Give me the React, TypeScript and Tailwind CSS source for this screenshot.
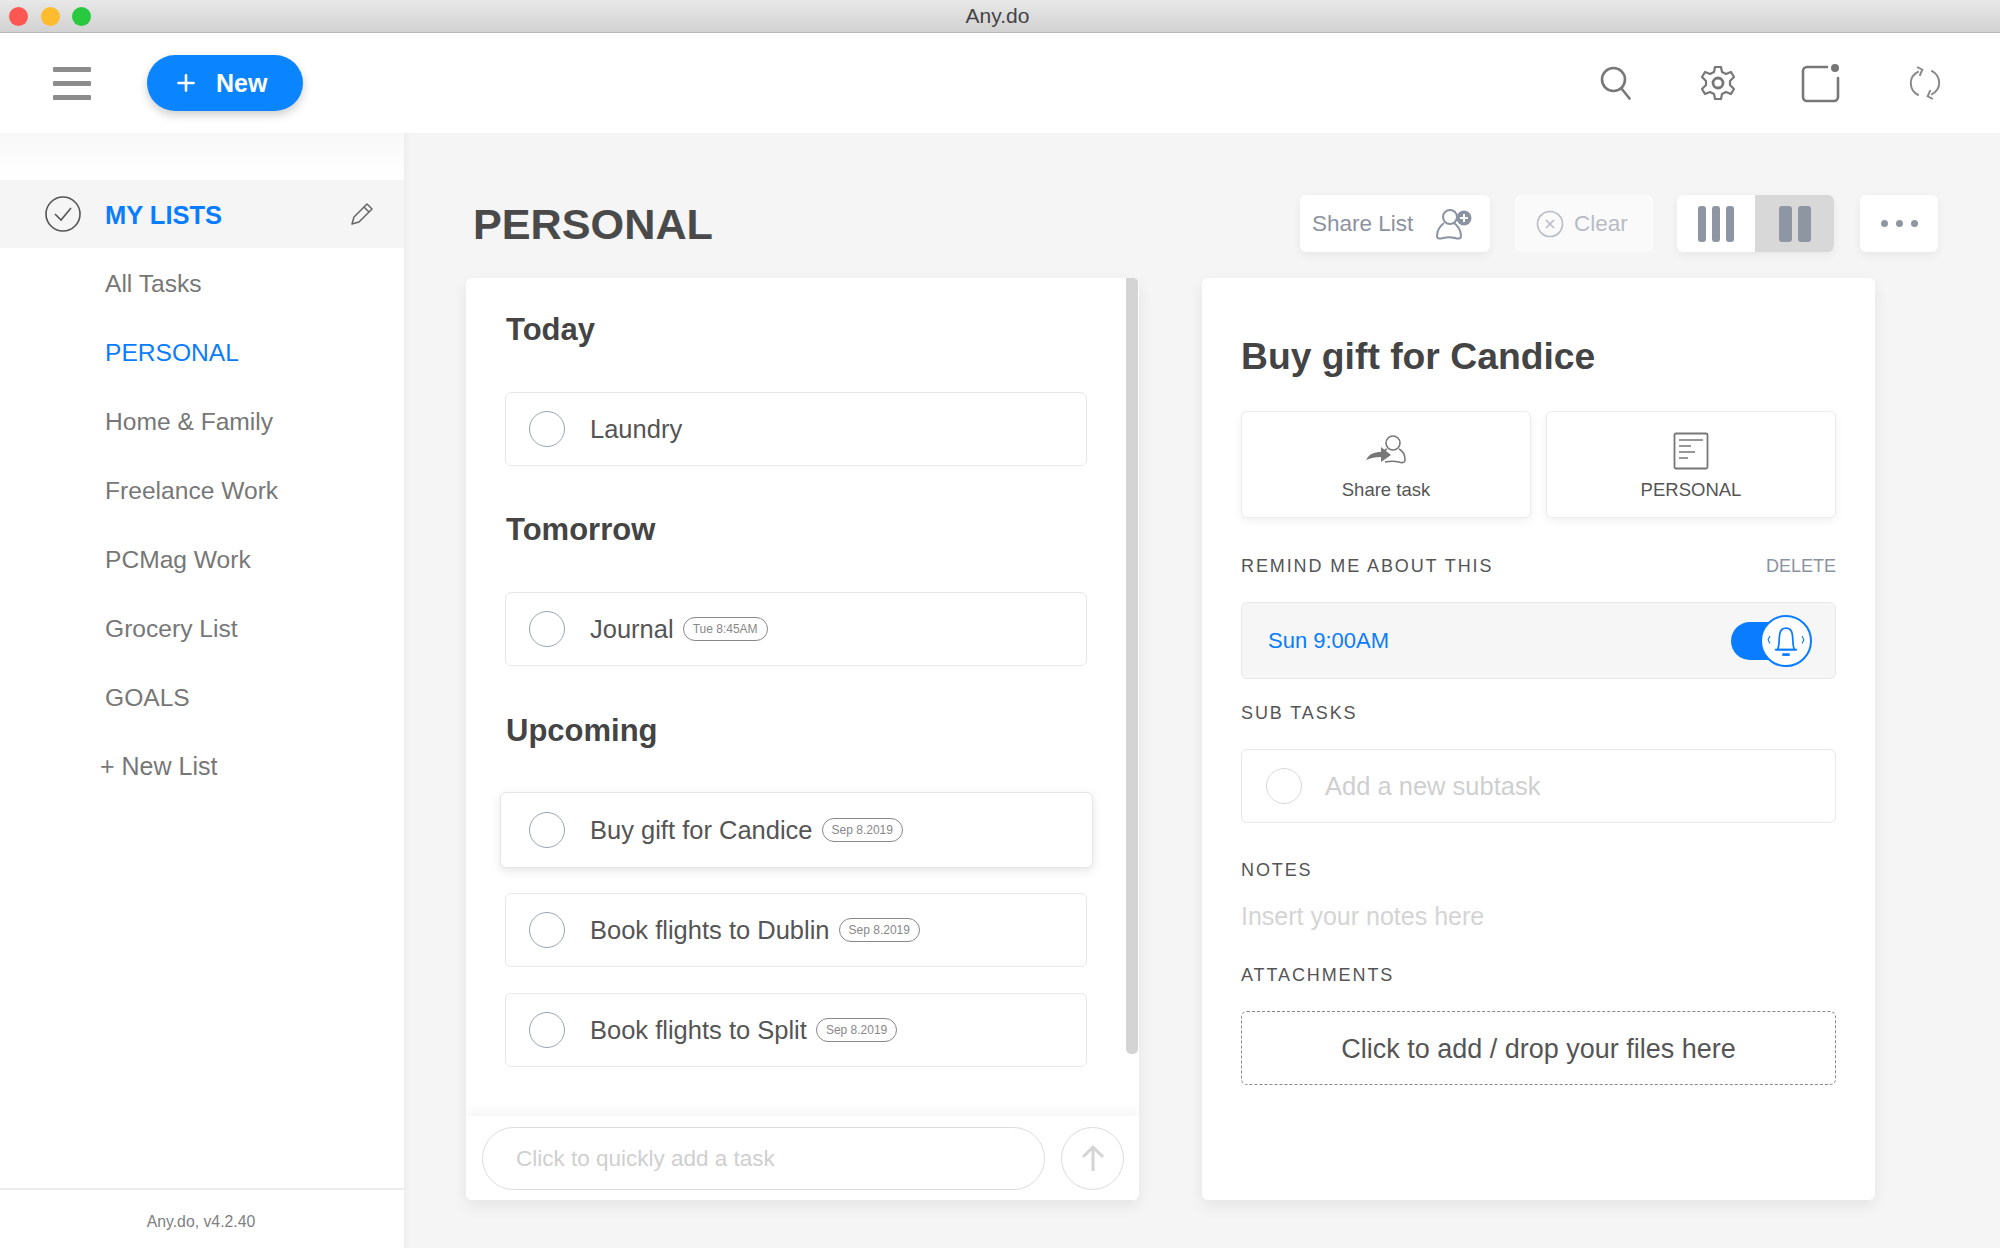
import { Plus } from "lucide-react";

const listas = ["All Tasks", "PERSONAL", "Home & Family", "Freelance Work", "PCMag Work", "Grocery List", "GOALS"];

function Radio({ className = "" }: { className?: string }) {
  return <span className={`block h-[36px] w-[36px] shrink-0 rounded-full border border-[#9aa3b2] ${className}`} />;
}

function Tarefa({ nome, data, ativa }: { nome: string; data?: string; ativa?: boolean }) {
  return (
    <div
      className={
        ativa
          ? "-ml-[5px] -mr-[6px] flex h-[76px] items-center rounded-[6px] border border-[#e6e6e6] bg-white pl-[28px] shadow-[0_3px_10px_rgba(0,0,0,0.1)]"
          : "flex h-[74px] items-center rounded-[6px] border border-[#e8e8e8] bg-white pl-[23px]"
      }
    >
      <Radio />
      <span className="ml-[25px] text-[25.5px] text-[#555]">{nome}</span>
      {data && (
        <span className="ml-[9px] flex h-[24px] items-center rounded-full border border-[#888] px-[9px] text-[12px] text-[#888]">
          {data}
        </span>
      )}
    </div>
  );
}

function Rotulo({ children, className = "" }: { children: React.ReactNode; className?: string }) {
  return <div className={`text-[18px] leading-[22px] tracking-[1.9px] text-[#555] ${className}`}>{children}</div>;
}

function IconeShareList() {
  return (
    <svg width="38" height="36" viewBox="0 0 38 36" fill="none" stroke="#8b93a1" strokeWidth="2">
      <circle cx="15" cy="11" r="7" />
      <path d="M9 17c-4 3-7 8-7 13 0 3 3 3 6 2 4-1 8-1 12 0 3 1 6 1 6-2 0-5-3-10-7-13" />
      <circle cx="29" cy="12" r="7.5" fill="#8b93a1" stroke="none" />
      <path d="M29 8v8M25 12h8" stroke="#fff" />
    </svg>
  );
}

export default function App() {
  return (
    <div className="flex h-[1248px] w-[2000px] flex-col overflow-hidden bg-white font-['Liberation_Sans',Arial,sans-serif]">
      {/* barra do mac */}
      <div className="relative flex h-[33px] shrink-0 items-center justify-center border-b border-[#b8b8b8] bg-gradient-to-b from-[#e8e8e8] to-[#d2d2d2] pr-[5px]">
        <div className="absolute left-[9px] flex gap-[12.5px]">
          <span className="h-[19px] w-[19px] rounded-full bg-[#fc5753]" />
          <span className="h-[19px] w-[19px] rounded-full bg-[#fdbc2e]" />
          <span className="h-[19px] w-[19px] rounded-full bg-[#28c83f]" />
        </div>
        <span className="text-[21px] text-[#444]">Any.do</span>
      </div>

      {/* topo */}
      <header className="z-10 flex h-[100px] shrink-0 items-center bg-white pl-[53px] pr-[59px]">
        <div className="flex w-[38px] flex-col gap-[9px]">
          <span className="h-[5px] rounded-[1px] bg-[#8c8c8c]" />
          <span className="h-[5px] rounded-[1px] bg-[#8c8c8c]" />
          <span className="h-[5px] rounded-[1px] bg-[#8c8c8c]" />
        </div>
        <button className="ml-[56px] flex h-[56px] w-[156px] items-center rounded-full bg-[#0a84ff] pl-[26px] text-[25px] font-semibold text-white shadow-[0_4px_10px_rgba(0,0,0,0.2)]">
          <Plus size={26} strokeWidth={2.4} />
          <span className="ml-[17px] pt-[1px]">New</span>
        </button>
        <div className="ml-auto flex items-center">
          <svg width="32" height="34" viewBox="0 0 32 34" fill="none" stroke="#777" strokeWidth="2.6" strokeLinecap="round">
            <circle cx="13.5" cy="13.5" r="11.5" />
            <path d="M21.5 22.5l8 10" />
          </svg>
          <svg className="ml-[67px]" width="38" height="38" viewBox="0 0 38 38" fill="none" stroke="#777" strokeWidth="2.2" strokeLinejoin="round">
            <path d="M16 3h6l1 5 4 2 5-2 3 5-4 4v4l4 4-3 5-5-2-4 2-1 5h-6l-1-5-4-2-5 2-3-5 4-4v-4l-4-4 3-5 5 2 4-2z" />
            <circle cx="19" cy="19" r="5" strokeWidth="2.8" />
          </svg>
          <svg className="ml-[64px]" width="40" height="40" viewBox="0 0 40 40" fill="none" stroke="#777" strokeWidth="2.6" strokeLinecap="round">
            <path d="M26 4H6a4 4 0 0 0-4 4v26a4 4 0 0 0 4 4h27a4 4 0 0 0 4-4V15" />
            <circle cx="34" cy="5" r="4" fill="#777" stroke="none" />
          </svg>
          <svg className="ml-[68px]" width="32" height="38" viewBox="0 0 36 38" fill="none" stroke="#888" strokeWidth="2.2">
            <path d="M11 6C5 9 2 14 2 19c0 6 3 11 9 14" />
            <path d="M25 32c6-3 9-8 9-13 0-6-3-11-9-14" />
            <path d="M9 1l6 3-3 7M27 37l-6-3 3-7" />
          </svg>
        </div>
      </header>

      <div className="flex min-h-0 flex-1">
        {/* lateral */}
        <aside className="flex w-[404px] shrink-0 flex-col bg-white">
          <div className="h-[47px] bg-gradient-to-b from-[#f8f8f8] to-white" />
          <div className="flex h-[68px] items-center bg-[#f5f5f5] pl-[45px] pr-[30px]">
            <svg width="36" height="36" viewBox="0 0 36 36" fill="none" stroke="#555" strokeWidth="1.6">
              <circle cx="18" cy="18" r="17" />
              <path d="M10 18l6 6 10-12" />
            </svg>
            <span className="ml-[24px] pt-[2px] text-[25.5px] font-bold text-[#0a7cff]">MY LISTS</span>
            <svg className="ml-auto" width="24" height="24" viewBox="0 0 24 24" fill="none" stroke="#666" strokeWidth="1.5" strokeLinejoin="round">
              <path d="M2 22l2-7L17 2l5 5L9 20z" />
              <path d="M14 5l5 5" />
            </svg>
          </div>
          <nav className="mt-[1px] flex flex-col">
            {listas.map((l) => (
              <div
                key={l}
                className={
                  l === "PERSONAL"
                    ? "flex h-[69px] items-center pl-[105px] pt-[1px] text-[24.6px] text-[#0a7cff]"
                    : "flex h-[69px] items-center pl-[105px] pt-[1px] text-[24.6px] text-[#777]"
                }
              >
                {l}
              </div>
            ))}
            <div className="flex h-[69px] items-center pl-[100px] text-[25px] text-[#777]">+ New List</div>
          </nav>
          <div className="mt-auto flex h-[60px] items-center justify-center border-t-2 border-[#ececec] pt-[5px] pr-[2px] text-[15.8px] text-[#808080]">
            Any.do, v4.2.40
          </div>
        </aside>

        {/* conteúdo */}
        <main className="min-w-0 flex-1 bg-[#f5f5f5] pl-[62px] pt-[62px] shadow-[inset_6px_0_8px_-6px_rgba(0,0,0,0.06)]">
          <div className="flex h-[57px] w-[1472px] items-center">
            <h1 className="pl-[7px] pt-[2px] text-[43.2px] font-bold text-[#4a4a4a]">PERSONAL</h1>
            <div className="ml-auto flex items-center">
              <button className="flex h-[57px] w-[190px] items-center rounded-[6px] bg-white pl-[12px] text-[22.5px] text-[#8b93a1] shadow-[0_3px_8px_rgba(0,0,0,0.06)]">
                Share List
                <span className="ml-[22px]">
                  <IconeShareList />
                </span>
              </button>
              <button className="ml-[25px] flex h-[57px] w-[138px] items-center rounded-[6px] bg-[#fafafa] pl-[21px] pt-[1px] text-[22.5px] text-[#b8bcc4]">
                <svg width="28" height="28" viewBox="0 0 28 28" fill="none" stroke="#b8bcc4" strokeWidth="1.6">
                  <circle cx="14" cy="14" r="12.5" />
                  <path d="M10 10l8 8M18 10l-8 8" />
                </svg>
                <span className="ml-[10px]">Clear</span>
              </button>
              <div className="ml-[24px] flex h-[57px] w-[157px] overflow-hidden rounded-[6px] bg-white shadow-[0_3px_8px_rgba(0,0,0,0.06)]">
                <div className="flex w-[78px] items-center justify-center gap-[6px]">
                  <span className="h-[36px] w-[8px] rounded-[3px] bg-[#8f96a3]" />
                  <span className="h-[36px] w-[8px] rounded-[3px] bg-[#8f96a3]" />
                  <span className="h-[36px] w-[8px] rounded-[3px] bg-[#8f96a3]" />
                </div>
                <div className="flex w-[79px] items-center justify-center gap-[6px] bg-[#d8d8d8]">
                  <span className="h-[36px] w-[13px] rounded-[3px] bg-[#8f96a3]" />
                  <span className="h-[36px] w-[13px] rounded-[3px] bg-[#8f96a3]" />
                </div>
              </div>
              <div className="ml-[26px] flex h-[57px] w-[78px] items-center justify-center gap-[8px] rounded-[6px] bg-white shadow-[0_3px_8px_rgba(0,0,0,0.06)]">
                <span className="h-[7px] w-[7px] rounded-full bg-[#8f96a3]" />
                <span className="h-[7px] w-[7px] rounded-full bg-[#8f96a3]" />
                <span className="h-[7px] w-[7px] rounded-full bg-[#8f96a3]" />
              </div>
            </div>
          </div>

          <div className="mt-[26px] flex h-[922px] gap-[63px]">
            {/* lista */}
            <section className="relative flex w-[673px] flex-col overflow-hidden rounded-[6px] bg-white shadow-[0_6px_16px_rgba(0,0,0,0.07)]">
              <div className="min-h-0 flex-1 pl-[39px] pr-[52px]">
                <h2 className="ml-[1px] mt-[35px] text-[31px] font-bold leading-[34px] text-[#444]">Today</h2>
                <div className="mt-[45px]">
                  <Tarefa nome="Laundry" />
                </div>
                <h2 className="ml-[1px] mt-[47px] text-[31px] font-bold leading-[34px] text-[#444]">Tomorrow</h2>
                <div className="mt-[45px]">
                  <Tarefa nome="Journal" data="Tue 8:45AM" />
                </div>
                <h2 className="ml-[1px] mt-[48px] text-[31px] font-bold leading-[34px] text-[#444]">Upcoming</h2>
                <div className="mt-[44px] flex flex-col gap-[25px]">
                  <Tarefa nome="Buy gift for Candice" data="Sep 8.2019" ativa />
                  <Tarefa nome="Book flights to Dublin" data="Sep 8.2019" />
                  <div className="mt-[1px]">
                    <Tarefa nome="Book flights to Split" data="Sep 8.2019" />
                  </div>
                </div>
              </div>
              <span className="absolute right-[1px] top-0 h-[776px] w-[12px] rounded-b-[5px] bg-[#d4d4d4]" />
              <div className="z-10 flex h-[84px] shrink-0 items-center gap-[16px] bg-white pl-[16px] pr-[15px] shadow-[0_-6px_10px_rgba(0,0,0,0.04)]">
                <div className="flex h-[63px] flex-1 items-center rounded-full border border-[#dcdcdc] pl-[33px] pt-[2px] text-[22.5px] text-[#cfcfcf]">
                  Click to quickly add a task
                </div>
                <div className="flex h-[63px] w-[63px] items-center justify-center rounded-full border border-[#dcdcdc]">
                  <svg width="26" height="28" viewBox="0 0 26 28" fill="none" stroke="#d4d4d4" strokeWidth="3">
                    <path d="M13 27V3M3 13L13 3l10 10" />
                  </svg>
                </div>
              </div>
            </section>

            {/* detalhe */}
            <section className="w-[673px] rounded-[6px] bg-white pl-[39px] pr-[39px] shadow-[0_6px_16px_rgba(0,0,0,0.07)]">
              <h2 className="mt-[58px] text-[37.3px] font-bold leading-[40px] text-[#444]">Buy gift for Candice</h2>
              <div className="mt-[35px] flex gap-[15px]">
                <div className="flex h-[107px] flex-1 flex-col items-center rounded-[6px] border border-[#ececec] bg-white pt-[22px] shadow-[0_3px_10px_rgba(0,0,0,0.06)]">
                  <svg width="42" height="34" viewBox="0 0 42 34" fill="none" stroke="#777" strokeWidth="1.6">
                    <circle cx="28" cy="9" r="7" />
                    <path d="M22 15c-3 1-3 3-3 4M34 15c4 2 6 6 6 11 0 3-3 3-6 2-4-1-9-1-14 0" />
                    <path d="M1 26c3-6 8-8 15-8v-5l10 8-10 7v-5c-6 0-10 1-15 3z" fill="#777" stroke="none" />
                  </svg>
                  <span className="mt-[8px] text-[18.5px] text-[#555]">Share task</span>
                </div>
                <div className="flex h-[107px] flex-1 flex-col items-center rounded-[6px] border border-[#ececec] bg-white pt-[20px] shadow-[0_3px_10px_rgba(0,0,0,0.06)]">
                  <svg width="36" height="38" viewBox="0 0 36 38" fill="none" stroke="#777" strokeWidth="1.8">
                    <rect x="1.5" y="1.5" width="33" height="35" rx="1.5" />
                    <path d="M6 8h24M6 14h12M6 20h16M6 26h9" strokeWidth="1.4" />
                  </svg>
                  <span className="mt-[6px] text-[18.5px] text-[#555]">PERSONAL</span>
                </div>
              </div>
              <div className="mt-[37px] flex items-center justify-between">
                <Rotulo>REMIND ME ABOUT THIS</Rotulo>
                <span className="text-[18px] leading-[22px] text-[#8b93a1]">DELETE</span>
              </div>
              <div className="mt-[25px] flex h-[77px] items-center rounded-[6px] border border-[#e8e8e8] bg-[#f6f6f6] pl-[26px] pr-[38px]">
                <span className="text-[22px] text-[#0a7cff]">Sun 9:00AM</span>
                <div className="relative ml-auto h-[38px] w-[66px] rounded-full bg-[#0a7cff]">
                  <div className="absolute -right-[15px] -top-[7px] flex h-[52px] w-[52px] items-center justify-center rounded-full border-2 border-[#0a7cff] bg-white">
                    <svg width="42" height="42" viewBox="0 0 34 34" fill="none" stroke="#0a7cff" strokeWidth="1.4">
                      <path d="M10 24c2-3 1-8 2-13 1-6 9-6 10 0 1 5 0 10 2 13z" />
                      <path d="M8 24h18" />
                      <path d="M14 28h6" strokeWidth="2.2" />
                      <path d="M4 13l-1.5 3L4 19M30 13l1.5 3-1.5 3" strokeWidth="0.9" />
                    </svg>
                  </div>
                </div>
              </div>
              <Rotulo className="mt-[23px]">SUB TASKS</Rotulo>
              <div className="mt-[25px] flex h-[74px] items-center rounded-[6px] border border-[#e8e8e8] pl-[24px]">
                <Radio className="border-[#d8d8d8]" />
                <span className="ml-[23px] pt-[1px] text-[25.5px] text-[#cfcfcf]">Add a new subtask</span>
              </div>
              <Rotulo className="mt-[36px]">NOTES</Rotulo>
              <div className="mt-[20px] text-[25px] leading-[30px] text-[#d4d4d4]">Insert your notes here</div>
              <Rotulo className="mt-[33px]">ATTACHMENTS</Rotulo>
              <div className="mt-[25px] flex h-[74px] items-center justify-center rounded-[6px] border border-dashed border-[#888] pt-[3px] text-[27px] text-[#555]">
                Click to add / drop your files here
              </div>
            </section>
          </div>
        </main>
      </div>
    </div>
  );
}
